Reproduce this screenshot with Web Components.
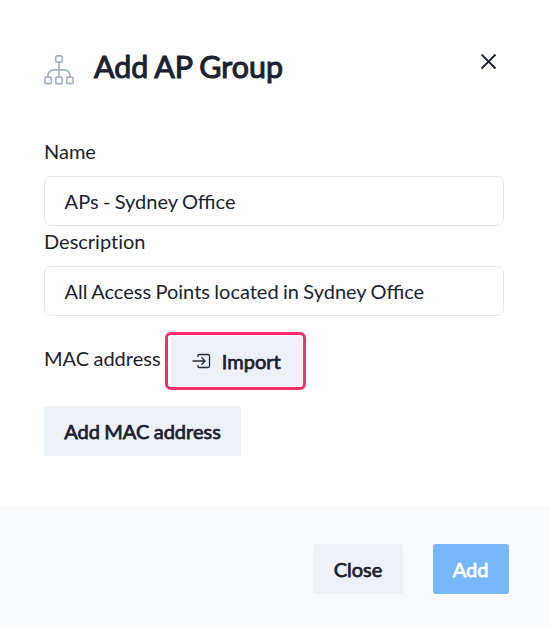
<!DOCTYPE html>
<html lang="en"><head><meta charset="utf-8"><title>Add AP Group</title>
<style>
body{margin:0;background:#fff;color:#1c2230;font:20px/30px Lato,sans-serif;word-spacing:-.75px}
</style></head><body>
<ap-dialog heading="Add AP Group">
  <text-field label="Name" value="APs - Sydney Office"></text-field>
  <text-field label="Description" value="All Access Points located in Sydney Office"></text-field>
  <mac-row>MAC address</mac-row>
  <ui-button class="add">Add MAC address</ui-button>
  <ui-button slot="footer" class="close">Close</ui-button>
  <ui-button slot="footer" class="primary">Add</ui-button>
</ap-dialog>
<script>
function define(name, html, setup){
  customElements.define(name, class extends HTMLElement{
    connectedCallback(){
      if(this.shadowRoot) return;
      const root=this.attachShadow({mode:'open'});
      root.innerHTML=html;
      if(setup) setup(this,root);
    }
  });
}
define('group-icon',`<style>:host{display:block;width:30px;height:31px}svg{display:block}</style>
<svg width="30" height="31" viewBox="0 0 30 31" fill="none" stroke="#a6b2c3" stroke-width="1.700"><rect x="11.800" y="1.800" width="6.400" height="6.400" rx="1.200"/><path d="M15 8.200v15M3.800 23.200v-.7c0-4.500 3-6.700 7-6.700h8.400c4 0 7 2.200 7 6.700v.7"/><rect x=".9" y="23.200" width="6.400" height="6.400" rx="1.200"/><rect x="11.800" y="23.200" width="6.400" height="6.400" rx="1.200"/><rect x="22.700" y="23.200" width="6.400" height="6.400" rx="1.200"/></svg>`);
define('close-icon',`<style>:host{display:block}svg{display:block}</style><svg width="16" height="16" viewBox="0 0 16 16" stroke="#191f2d" stroke-width="1.900"><path d="M.5 .5l14 14M14.500 .5L.5 14.500"/></svg>`);
define('import-icon',`<style>:host{display:block;margin-top:1px}svg{display:block}</style><svg width="20" height="18" viewBox="0 0 20 18" fill="none" stroke="#252b38" stroke-width="1.300"><path d="M6 5V3.700Q6 2.500 7.200 2.500H16Q17.500 2.500 17.500 4V14Q17.500 15.500 16 15.500H7.200Q6 15.500 6 14.300V13M.5 9H12.800M9.500 5.300L13 9L9.500 12.700"/></svg>`);
define('ui-button',`<style>:host{display:flex;box-sizing:border-box;height:50px;width:max-content;align-items:center;justify-content:center;background:#edf1f6;border-radius:3px;-webkit-text-stroke:.75px currentColor;white-space:nowrap;padding:0 0 1px}
:host(.add){width:197px;margin-top:16px}:host(.close){width:90px}:host(.primary){width:76px;background:#77b8fc;color:#fff;padding-right:1px}:host(.import){width:131px;gap:9.500px;padding-right:0}</style><slot></slot>`);
define('text-field',`<style>:host{display:block}label{display:block;height:40px;line-height:30px;font-variant-ligatures:none}div{box-sizing:border-box;height:50px;border:1px solid #e2e6ee;border-radius:7px;padding:0 19.600px;line-height:48px;white-space:nowrap}</style><label></label><div></div>`,(el,r)=>{r.querySelector('label').textContent=el.getAttribute('label');r.querySelector('div').textContent=el.getAttribute('value')});
define('mac-row',`<style>:host{display:flex;align-items:flex-start;margin-top:16px}span{width:121px;line-height:52px}.ring{box-sizing:border-box;width:141px;height:58px;border:3px solid #fb2c6b;border-radius:6px;padding:1px 1px 1px 3px}</style><span><slot></slot></span><div class="ring"><ui-button class="import"><import-icon></import-icon>Import</ui-button></div>`);
define('ap-dialog',`<style>:host{display:flex;flex-direction:column;width:550px;height:628px}header{display:flex;height:136px;box-sizing:border-box;padding:54px 53px 0 44px}h1{margin:-8px 0 0 20px;font-size:30.400px;line-height:40px;flex:1;font-weight:400;-webkit-text-stroke:1.100px currentColor}main{width:460px;height:370px;margin-left:44px}footer{box-sizing:border-box;height:122px;background:#f9fafc;padding:38px 41px 0;display:flex;justify-content:flex-end;gap:30px}</style><header><group-icon></group-icon><h1></h1><close-icon></close-icon></header><main><slot></slot></main><footer><slot name="footer"></slot></footer>`,(el,r)=>r.querySelector('h1').textContent=el.getAttribute('heading'));
</script></body></html>
